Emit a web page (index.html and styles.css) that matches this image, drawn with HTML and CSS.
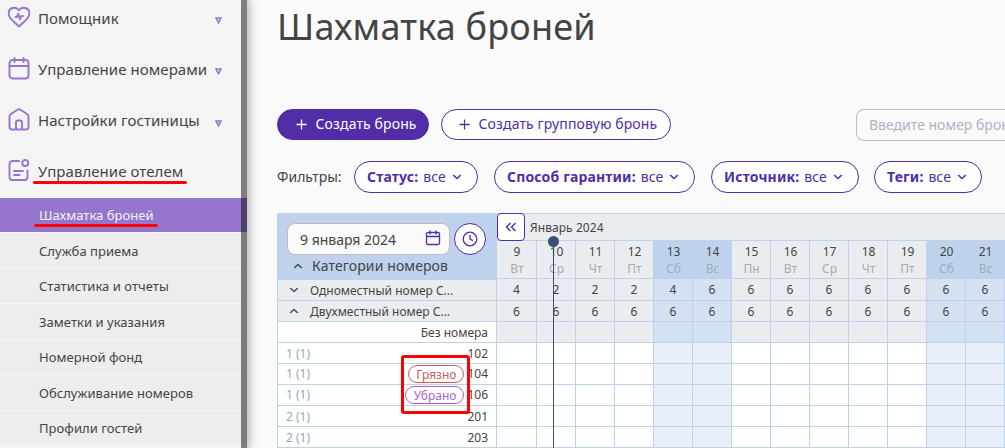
FILE: index.html
```html
<!DOCTYPE html>
<html lang="ru">
<head>
<meta charset="utf-8">
<title>Шахматка броней</title>
<link rel="stylesheet" href="styles.css">
</head>
<body>
<div class="app">
  <aside class="sidebar">
    <nav class="menu">
      <a class="menu-item">
        <svg class="menu-icon" viewBox="0 0 24 24"><path d="M12 21.500 C9 18.500 5 15.500 3 12.500 C.6 9 1.500 4 5.500 3 C8.300 2.200 10.500 3.200 12 5.200 C13.500 3.200 15.700 2.200 18.500 3 C22.500 4 23.400 9 21 12.500 C19 15.500 15 18.500 12 21.500Z"/><path d="M8.500 12h1.300l1.400-3.300 1.800 5.600 1.300-3.300H16"/></svg>
        <span>Помощник</span><svg class="caret" viewBox="0 0 7 7"><path d="M1 1h5L3.500 5.700Z"/></svg>
      </a>
      <a class="menu-item">
        <svg class="menu-icon" viewBox="0 0 24 24"><rect x="2.500" y="4" width="19" height="18.500" rx="3"/><path d="M2.500 10h19M7.500 2V6M16.500 2V6"/></svg>
        <span>Управление номерами</span><svg class="caret" viewBox="0 0 7 7"><path d="M1 1h5L3.500 5.700Z"/></svg>
      </a>
      <a class="menu-item">
        <svg class="menu-icon" viewBox="0 0 24 24"><path d="M2.500 9.500C2.500 8.500 2.800 7.900 3.600 7.300L10.500 2.700c1-.7 2-.7 3 0l6.900 4.600c.8.600 1.100 1.200 1.100 2.200V20a2.500 2.500 0 0 1-2.500 2.500h-14A2.500 2.500 0 0 1 2.500 20ZM9 22v-6.500q0-2 2-2h2q2 0 2 2V22"/></svg>
        <span>Настройки гостиницы</span><svg class="caret low-caret" viewBox="0 0 7 7"><path d="M1 1h5L3.500 5.700Z"/></svg>
      </a>
      <a class="menu-item">
        <svg class="menu-icon" viewBox="0 0 24 24"><path d="M12 3H5.500a3 3 0 0 0-3 3v13a3 3 0 0 0 3 3h12a3 3 0 0 0 3-3V12.500M7 13h9M7 17h5.500"/><circle cx="18.200" cy="5" r="3"/></svg>
        <span class="marked">Управление отелем</span>
      </a>
    </nav>
    <nav class="submenu">
      <a class="sub active"><span class="marked">Шахматка броней</span></a>
      <a class="sub">Служба приема</a>
      <a class="sub">Статистика и отчеты</a>
      <a class="sub">Заметки и указания</a>
      <a class="sub">Номерной фонд</a>
      <a class="sub">Обслуживание номеров</a>
      <a class="sub">Профили гостей</a>
    </nav>
    <div class="scrollbar"></div>
  </aside>
  <main class="main">
    <h1 class="title">Шахматка броней</h1>
    <div class="actions">
      <button class="btn primary"><svg class="plus" viewBox="0 0 12 12"><path d="M6 .5v11M.5 6h11"/></svg>Создать бронь</button>
      <button class="btn group"><svg class="plus" viewBox="0 0 12 12"><path d="M6 .5v11M.5 6h11"/></svg>Создать групповую бронь</button>
      <div class="search">Введите номер брони</div>
    </div>
    <div class="filters">
      <span class="filters-label">Фильтры:</span>
      <button class="filter f1"><b>Статус:</b> все<svg class="chev" viewBox="0 0 10 6"><path d="M1.200 1 5 4.500 8.800 1"/></svg></button>
      <button class="filter f2"><b>Способ гарантии:</b> все<svg class="chev" viewBox="0 0 10 6"><path d="M1.200 1 5 4.500 8.800 1"/></svg></button>
      <button class="filter f3"><b>Источник:</b> все<svg class="chev" viewBox="0 0 10 6"><path d="M1.200 1 5 4.500 8.800 1"/></svg></button>
      <button class="filter f4"><b>Теги:</b> все<svg class="chev" viewBox="0 0 10 6"><path d="M1.200 1 5 4.500 8.800 1"/></svg></button>
    </div>
    <section class="board">
      <div class="rooms">
        <div class="rooms-head">
          <div class="date-row">
            <div class="date">9 января 2024<svg class="cal" viewBox="0 0 16 16"><rect x="1.500" y="2.500" width="13" height="12" rx="1.500"/><path d="M1.500 6.500h13M5 .5v4M11 .5v4"/></svg></div>
            <div class="clock"><svg viewBox="0 0 16 16"><circle cx="8" cy="8" r="6.800"/><path d="M8 4v4.200l3 1.500"/></svg></div>
          </div>
          <div class="cats"><svg class="chev dark" viewBox="0 0 10 6"><path d="M1.200 5 5 1.500 8.800 5"/></svg>Категории номеров</div>
        </div>
        <div class="row cat"><svg class="chev blue" viewBox="0 0 10 6"><path d="M1.200 1 5 4.500 8.800 1"/></svg>Одноместный номер С...</div>
        <div class="row cat"><svg class="chev blue" viewBox="0 0 10 6"><path d="M1.200 5 5 1.500 8.800 5"/></svg>Двухместный номер С...</div>
        <div class="row room low"><span class="none">Без номера</span></div>
        <div class="row room low"><i>1 (1)</i><span>102</span></div>
        <div class="row room"><i>1 (1)</i><em class="tag dirty">Грязно</em><span>104</span></div>
        <div class="row room"><i>1 (1)</i><em class="tag clean">Убрано</em><span>106</span></div>
        <div class="row room low"><i>2 (1)</i><span>201</span></div>
        <div class="row room low"><i>2 (1)</i><span>203</span></div>
        <div class="highlight"></div>
      </div>
      <div class="timeline">
        <div class="month"><span class="back"><svg viewBox="0 0 12 10"><path d="M5.500 1 1.500 5l4 4M10.500 1l-4 4 4 4"/></svg></span>Январь 2024</div>
        <div class="grid" id="grid"></div>
        <div class="now"></div>
      </div>
    </section>
  </main>
</div>
<script src="grid.js"></script>
</body>
</html>
```
FILE: styles.css
```css
* { box-sizing: border-box; }
body { margin: 0; font-family: "Noto Sans", "Open Sans", sans-serif; color: #444; background: #fafafa; overflow: hidden; }
svg { fill: none; stroke: currentColor; display: block; flex: none; }
.app { display: flex; width: 1005px; height: 448px; overflow: hidden; }

.sidebar { width: 247px; height: 448px; position: relative; background: #f4f4f4; flex: none; box-shadow: 0 0 9px 2px rgba(0,0,0,.3); }
.menu { height: 206px; margin-top: -8px; }
.menu-item { display: flex; align-items: center; height: 51px; padding-left: 7px; font-size: 15px; letter-spacing: .06px; }
.menu-item span { margin-left: 7px; line-height: 20px; }
.menu-icon { width: 24px; height: 24px; margin-top: -2px; color: #9575cd; stroke-width: 1.9; stroke-linecap: round; stroke-linejoin: round; }
.menu-item .caret { width: 7px; height: 7px; margin: 5px 25px 0 auto; color: #9575cd; stroke-width: 1.6; }
.menu-item .low-caret { margin-top: 7px; }
.marked { position: relative; }
.menu-item .marked::after, .sub .marked::after { content: ""; position: absolute; left: -5px; right: -4px; bottom: -3px; height: 3px; border-radius: 2px; background: #f00; }
.menu-item .marked::after { bottom: -3px; }
.submenu { height: 250px; overflow: hidden; }
.sub { display: flex; align-items: center; height: 35.500px; padding: 1px 0 0 39px; font-size: 13px; line-height: 18px; letter-spacing: .04px; background: #ededed; border-bottom: 1px solid #f7f7f7; }
.sub.active { height: 35px; padding-top: 0; background: #9575cd; color: #f4f4f4; }
.scrollbar { position: absolute; right: 0; top: 0; width: 6px; height: 448px; background: rgba(0,0,0,.48); }

.main { width: 758px; flex: none; padding: 0 0 0 30px; }
.title { margin: 0; font-weight: 400; font-size: 36px; letter-spacing: .2px; line-height: 54px; height: 109px; color: #444; }
.actions { display: flex; height: 52px; align-items: flex-start; }
.btn { display: flex; flex: none; align-items: center; height: 31px; padding: 0 0 2px 18px; border: 1px solid #512da8; border-radius: 16px; font: 14px "Noto Sans", sans-serif; letter-spacing: .13px; color: #512da8; background: #fff; white-space: nowrap; }
.primary { width: 152px; color: #fff; background: #512da8; margin-right: 12px; }
.group { width: 230px; padding-left: 17px; }
.plus { width: 11px; height: 11px; margin: 2px 8.500px 0 0; stroke-width: 1.400; }
.search { flex: none; width: 149px; height: 32px; margin-left: 185px; padding-left: 12px; border: 1px solid #bdbdbd; border-right: 0; border-radius: 8px 0 0 8px; font-size: 14px; line-height: 30px; color: #aab4c4; white-space: nowrap; overflow: hidden; }
.filters { display: flex; height: 52px; align-items: flex-start; }
.filters-label { width: 77px; font-size: 14px; line-height: 31px; }
.filter { display: flex; flex: none; align-items: center; height: 32px; padding: 0 0 1px 12px; border: 1px solid #512da8; border-radius: 16px; color: #512da8; background: #fff; font: 14px "Noto Sans", sans-serif; white-space: nowrap; }
.filter b { margin-right: 5px; letter-spacing: .15px; }
.chev { width: 10px; height: 6px; stroke-width: 1.500; }
.filter .chev { margin-left: 6px; }
.f1 { width: 124px; margin-right: 16px; }
.f2 { width: 201px; margin-right: 16px; }
.f3 { width: 148px; margin-right: 15px; }
.f4 { width: 108px; }

.board { display: flex; height: 235px; }
.rooms { position: relative; width: 220px; flex: none; border: solid #bfd2ec; border-width: 0 1px; }
.rooms-head { height: 67px; background: #bfd2ec; padding: 10px 0 0 9px; }
.date-row { display: flex; gap: 4px; }
.date { display: flex; align-items: center; justify-content: space-between; width: 163px; height: 32px; padding: 0 8px 0 12px; border: 1px solid #bdbdbd; border-radius: 8px; background: #fafafa; font-size: 14px; }
.cal { width: 16px; height: 16px; color: #512da8; stroke-width: 1.300; margin-top: -3px; }
.clock { display: grid; place-items: center; width: 32px; height: 32px; border: 1px solid #512da8; border-radius: 50%; color: #512da8; background: #fff; }
.clock svg { width: 16px; height: 16px; stroke-width: 1.300; }
.cats { display: flex; align-items: center; font-size: 14px; letter-spacing: .1px; line-height: 22px; padding-left: 6px; }
.cats .chev { margin-right: 9px; }
.row { display: flex; align-items: center; height: 21px; border-bottom: 1px solid #bfd2ec; font-size: 12px; line-height: 20px; }
.cat { background: #e9edf0; padding: 1px 0 0 11px; }
.cat .chev { margin: -2px 11px 0 0; }
.blue { color: #3a5274; }
.room { background: #fff; padding: 0 8px; }
.room i { font-style: normal; color: #9aa5b5; }
.room span { margin-left: auto; }
.low { padding-top: 1px; }
.tag { margin-left: auto; padding: 0 7px; height: 18px; line-height: 17px; border: 1px solid; border-radius: 9px; font-style: normal; }
.room .tag + span { margin-left: 3px; }
.dirty { color: #cd5c5c; }
.clean { padding-left: 8px; color: #ab61d0; }
.highlight { position: absolute; left: 123px; top: 142px; width: 69px; height: 59px; border: 3px solid #f00; border-radius: 3px; }

.timeline { position: relative; width: 508px; flex: none; }
.month { display: flex; height: 28px; border-top: 1px solid #bfd2ec; border-bottom: 1px solid #bfd2ec; background: #e9edf0; font-size: 12px; line-height: 28px; letter-spacing: .07px; }
.back { display: grid; place-items: center; width: 28px; height: 28px; margin: -1px 5px 0 0; border: 1px solid #512da8; border-radius: 4px; background: #fff; color: #512da8; }
.back svg { width: 12px; height: 10px; stroke-width: 1.400; }
.grid { display: grid; grid-template-columns: 40px repeat(12, 39px); grid-template-rows: 38px 22px repeat(7, 21px); }
.cell { border-right: 1px solid #bfd2ec; border-bottom: 1px solid #bfd2ec; background: #fff; font-size: 12px; line-height: 20px; padding-top: 1px; text-align: center; }
.cell.grey { background: #e9edf0; }
.cell.free { background: #e8eff9; }
.cell.grey.free { background: #d4e1f3; }
.cell.day { line-height: 17px; padding: 2px 0 0 1px; }
.cell.day.free { background: #bfd2ec; }
.cell.day small { display: block; font-size: 12px; color: #a1abba; }
.now { position: absolute; left: 56px; top: 28px; width: 1px; height: 207px; background: #3a5274; }
.now::before { content: ""; position: absolute; left: -5px; top: -5px; width: 11px; height: 11px; border-radius: 50%; background: #3a5274; }
```
FILE: grid.js
```js
const names = ['Вт', 'Ср', 'Чт', 'Пт', 'Сб', 'Вс', 'Пн'];
const single = [4, 2, 2, 2, 4, 6, 6, 6, 6, 6, 6, 6, 6];
const grid = document.getElementById('grid');
for (let row = 0; row < 9; row++) {
  for (let i = 0; i < 13; i++) {
    const cell = document.createElement('div');
    const name = names[i % 7];
    cell.className = 'cell' + (row < 4 ? ' grey' : '') + (name === 'Сб' || name === 'Вс' ? ' free' : '') + (row === 0 ? ' day' : '');
    if (row === 0) cell.innerHTML = (9 + i) + '<small>' + name + '</small>';
    if (row === 1) cell.textContent = single[i];
    if (row === 2) cell.textContent = 6;
    grid.appendChild(cell);
  }
}
```
